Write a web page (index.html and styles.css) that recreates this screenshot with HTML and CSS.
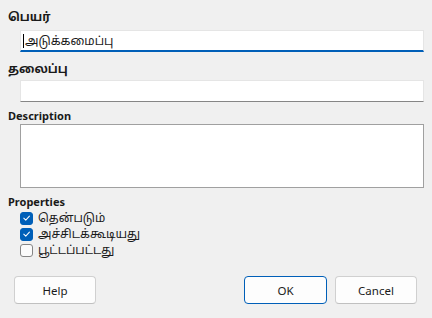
FILE: index.html
```html
<!DOCTYPE html>
<html lang="ta">
<head>
<meta charset="utf-8">
<title>Dialog</title>
<link rel="stylesheet" href="styles.css">
</head>
<body>
<div class="dialog">
  <div class="label first"><span class="ta">பெயர்</span></div>
  <div class="field focused"><span class="caret"></span><span class="value ta">அடுக்கமைப்பு</span></div>
  <div class="label second"><span class="ta">தலைப்பு</span></div>
  <div class="field"></div>
  <div class="label desc">Description</div>
  <div class="area"></div>
  <div class="label props">Properties</div>
  <div class="checks">
    <div class="check"><span class="box on"><svg viewBox="0 0 12 12" width="12" height="12"><path d="M3 6.2 L5.2 8.3 L9.2 3.9" fill="none" stroke="#fff" stroke-width="1.1" stroke-linecap="round" stroke-linejoin="round"/></svg></span><span class="ctext ta">தென்படும்</span></div>
    <div class="check"><span class="box on"><svg viewBox="0 0 12 12" width="12" height="12"><path d="M3 6.2 L5.2 8.3 L9.2 3.9" fill="none" stroke="#fff" stroke-width="1.1" stroke-linecap="round" stroke-linejoin="round"/></svg></span><span class="ctext ta">அச்சிடக்கூடியது</span></div>
    <div class="check"><span class="box"></span><span class="ctext ta">பூட்டப்பட்டது</span></div>
  </div>
  <div class="buttons">
    <button class="btn">Help</button>
    <div class="spacer"></div>
    <button class="btn default">OK</button>
    <button class="btn">Cancel</button>
  </div>
</div>
</body>
</html>
```

FILE: styles.css
```css
html, body {
  margin: 0;
  padding: 0;
}
body {
  width: 432px;
  height: 318px;
  background: #f0f0f0;
  font-family: "Noto Sans", "Noto Sans Tamil", "Noto Sans Tamil UI", "Lohit Tamil", "FreeSans", "Liberation Sans", sans-serif;
  font-size: 11px;
  color: #1a1a1a;
  overflow: hidden;
}
.ta {
  font-size: 12px;
}
.dialog {
  display: flex;
  flex-direction: column;
  padding: 8px 8px 0 8px;
}
.label {
  font-weight: bold;
  line-height: 18px;
  height: 18px;
  white-space: nowrap;
}
.label.first { margin-bottom: 4px; }
.label.second { margin-top: 8px; margin-bottom: 2px; }
.label.desc { margin-top: 6px; line-height: 16px; height: 16px; }
.label.props { margin-top: 6px; line-height: 16px; height: 16px; }
.field {
  margin-left: 12px;
  width: 404px;
  height: 22px;
  box-sizing: border-box;
  background: #fff;
  border: 1px solid #e5e5e5;
  border-bottom: 1px solid #868686;
  display: flex;
  align-items: center;
  padding-left: 2px;
  overflow: hidden;
}
.field.focused {
  border-bottom: 2px solid #005fb8;
}
.caret {
  width: 1px;
  height: 14px;
  background: #000;
  margin-right: 1px;
}
.value {
  font-weight: normal;
  line-height: 18px;
  white-space: nowrap;
}
.area {
  margin-left: 12px;
  width: 404px;
  height: 64px;
  box-sizing: border-box;
  background: #fff;
  border: 1px solid #a0a0a0;
}
.checks {
  display: flex;
  flex-direction: column;
  margin-left: 12px;
}
.check {
  display: flex;
  align-items: center;
  height: 16px;
  gap: 5px;
}
.box {
  width: 13px;
  height: 13px;
  flex: none;
  box-sizing: border-box;
  border-radius: 3px;
  border: 1px solid #858585;
  background: #fbfbfb;
  display: flex;
  align-items: center;
  justify-content: center;
}
.box.on {
  background: #005fb8;
  border-color: #005fb8;
}
.box svg { display: block; }
.ctext {
  line-height: 16px;
  white-space: nowrap;
}
.buttons {
  display: flex;
  margin-top: 18px;
  padding: 0 7px 0 6px;
  gap: 8px;
}
.spacer { flex: 1; }
.btn {
  width: 82px;
  height: 28px;
  box-sizing: border-box;
  background: #fdfdfd;
  border: 1px solid #d0d0d0;
  border-bottom-color: #c0c0c0;
  border-radius: 4px;
  font-family: "Noto Sans", "Liberation Sans", sans-serif;
  font-size: 11.5px;
  color: #1a1a1a;
  padding: 0;
}
.btn.default {
  border: 1px solid #005fb8;
  width: 83px;
}
```
